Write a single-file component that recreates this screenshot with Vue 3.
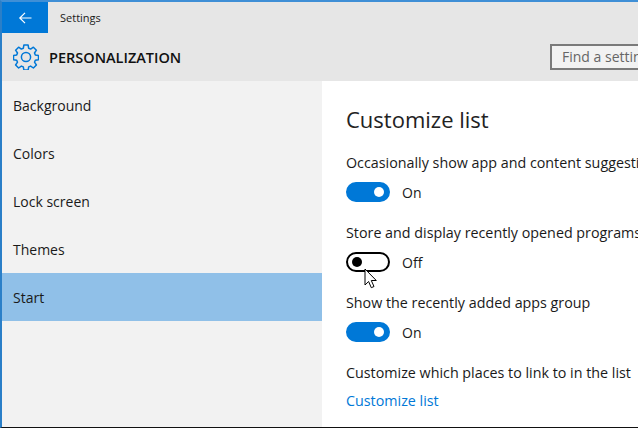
<template>
  <div class="window">
    <header class="top">
      <div class="title-bar">
        <button class="back">
          <svg width="14" height="12" viewBox="0 0 14 12" fill="none" stroke="#fff" stroke-width="1.2">
            <path d="M2 6H13.500M7 .8L1.800 6 7 11.200" />
          </svg>
        </button>
        <span class="app-name">Settings</span>
      </div>
      <div class="page-bar">
        <svg class="gear" width="26" height="26" viewBox="0 0 26 26" fill="none" stroke="#0078d7" stroke-width="1.5" stroke-linejoin="round">
          <path d="M10.9 1.5h4.2l.6 3.3 1.9.8 2.8-1.9 3 3-1.9 2.8.8 1.9 3.2.6v4.2l-3.2.6-.8 1.9 1.9 2.8-3 3-2.8-1.9-1.9.8-.6 3.2h-4.2l-.6-3.2-1.9-.8-2.8 1.9-3-3 1.9-2.8-.8-1.9-3.2-.6v-4.2l3.2-.6.8-1.9-1.9-2.8 3-3 2.8 1.9 1.9-.8z" transform="translate(0 -.5)" />
          <circle cx="13" cy="13" r="4.6" />
        </svg>
        <h1 class="page-title">PERSONALIZATION</h1>
        <div class="search">Find a setting</div>
      </div>
    </header>
    <div class="body">
      <nav class="side">
        <div v-for="item in navItems" :key="item" class="nav-item" :class="{ active: item === 'Start' }">{{ item }}</div>
      </nav>
      <main class="content">
        <h2 class="heading">Customize list</h2>
        <div v-for="row in toggles" :key="row.label" class="setting">
          <div class="label">{{ row.label }}</div>
          <div class="toggle-row">
            <span class="toggle" :class="{ on: row.on }"><span class="knob"></span></span>
            <span class="state">{{ row.on ? 'On' : 'Off' }}</span>
          </div>
        </div>
        <div class="label">Customize which places to link to in the list</div>
        <a class="link">Customize list</a>
        <svg class="cursor" width="14" height="22" viewBox="0 0 14 22">
          <path d="M1 1v16l3.600-3.500 2.700 6.200 2.700-1.200-2.700-6h5z" fill="#fff" stroke="#000" stroke-width="1" />
        </svg>
      </main>
    </div>
  </div>
</template>

<script setup>
const navItems = ['Background', 'Colors', 'Lock screen', 'Themes', 'Start']

const toggles = [
  { label: 'Occasionally show app and content suggestions in Start', on: true },
  { label: 'Store and display recently opened programs in Start', on: false },
  { label: 'Show the recently added apps group', on: true },
]
</script>

<style>
html,
body {
  margin: 0;
  overflow: hidden;
}
</style>

<style scoped>
.window {
  width: 638px;
  height: 428px;
  box-sizing: border-box;
  border-top: 2px solid #3f8fd6;
  border-left: 2px solid #2a7fc8;
  border-bottom: 1px solid #111;
  background: #fff;
  overflow: hidden;
  display: flex;
  flex-direction: column;
  font-family: "Open Sans", "Noto Sans", sans-serif;
  color: #1a1a1a;
}

.top {
  height: 79px;
  background: #e6e6e6;
  flex: none;
}

.title-bar {
  height: 31px;
  display: flex;
  align-items: center;
}

.back {
  width: 46px;
  height: 31px;
  border: 0;
  padding: 0;
  background: #0078d7;
  display: flex;
  align-items: center;
  justify-content: center;
}

.app-name {
  margin-left: 12px;
  font-size: 11px;
}

.page-bar {
  height: 48px;
  display: flex;
  align-items: center;
  padding-left: 11px;
}

.page-title {
  margin: 0 0 0 10px;
  font-size: 14.500px;
  font-weight: 600;
  color: #111;
}

.search {
  margin-left: auto;
  width: 122px;
  height: 26px;
  flex: none;
  margin-right: -34px;
  box-sizing: border-box;
  border: 2px solid #7a7a7a;
  background: #f2f2f2;
  color: #666;
  font-size: 14px;
  line-height: 22px;
  padding-left: 10px;
  white-space: nowrap;
  overflow: hidden;
}

.body {
  flex: 1;
  display: flex;
  min-height: 0;
}

.side {
  width: 320px;
  flex: none;
  background: #f2f2f2;
}

.nav-item {
  height: 48px;
  line-height: 49px;
  padding-left: 11px;
  font-size: 14px;
}

.nav-item.active {
  background: #90c0e8;
}

.content {
  flex: 1;
  min-width: 0;
  padding: 22px 0 0 24px;
  position: relative;
  overflow: hidden;
  white-space: nowrap;
}

.heading {
  margin: 0 0 18px;
  font-size: 22px;
  font-weight: 400;
  line-height: 32px;
  color: #222;
}

.setting {
  height: 70px;
}

.label {
  font-size: 14.300px;
  line-height: 20px;
}

.toggle-row {
  display: flex;
  align-items: center;
  margin-top: 9px;
}

.toggle {
  width: 44px;
  height: 20px;
  box-sizing: border-box;
  border-radius: 10px;
  border: 2px solid #000;
  display: flex;
  align-items: center;
  padding: 0 4px;
  background: #fff;
}

.toggle.on {
  background: #0078d7;
  border-color: #0078d7;
  justify-content: flex-end;
}

.knob {
  width: 10px;
  height: 10px;
  border-radius: 50%;
  background: #000;
}

.toggle.on .knob {
  background: #fff;
}

.state {
  margin-left: 12px;
  font-size: 14px;
}

.link {
  display: block;
  margin-top: 8px;
  font-size: 14.300px;
  line-height: 20px;
  color: #0078d7;
}

/* mouse pointer lying over the switch */
.cursor {
  position: absolute;
  left: 42px;
  top: 187px;
}
</style>
